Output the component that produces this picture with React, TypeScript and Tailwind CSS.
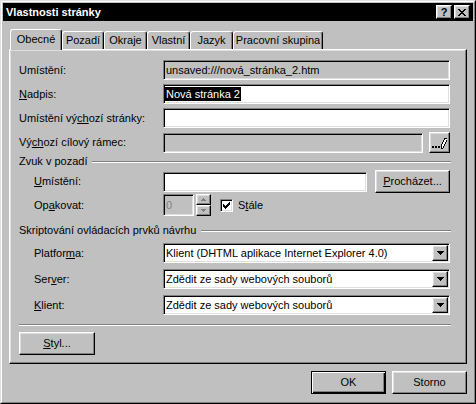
import React from "react";

const raised =
  "border border-t-white border-l-white border-b-black border-r-black shadow-[inset_-1px_-1px_#808080,inset_1px_1px_#dfdfdf]";
const sunken =
  "border border-t-[#808080] border-l-[#808080] border-b-white border-r-white shadow-[inset_1px_1px_#000000,inset_-1px_-1px_#dfdfdf]";

function DropArrow() {
  return (
    <svg width="7" height="4" viewBox="0 0 7 4" shapeRendering="crispEdges">
      <path d="M0 0h7v1h-1v1h-1v1h-1v1h-1v-1h-1v-1h-1v-1h-1z" fill="#000" />
    </svg>
  );
}

function Combo({ text }: { text: string }) {
  return (
    <div className={`${sunken} w-[287px] h-[20px] bg-white p-px flex items-center`}>
      <div className="flex-1 pl-[1px] whitespace-nowrap overflow-hidden">{text}</div>
      <div className={`${raised} w-[16px] h-[16px] bg-[#c0c0c0] flex items-center justify-center`}>
        <DropArrow />
      </div>
    </div>
  );
}

function Tab({ w, label }: { w: string; label: string }) {
  return (
    <div
      className={`${w} h-[18px] border-t border-l border-r border-t-white border-l-white border-r-black shadow-[inset_-1px_0_#808080] rounded-t-[3px] flex justify-center pt-[2px] whitespace-nowrap`}
    >
      {label}
    </div>
  );
}

export default function App() {
  return (
    <div className="w-[476px] h-[404px] overflow-hidden bg-[#c0c0c0] border border-t-[#dfdfdf] border-l-[#dfdfdf] border-b-black border-r-black font-['Liberation_Sans',Arial,sans-serif] text-[11px] leading-[13px] text-black">
      <div className="h-full border border-t-white border-l-white border-b-[#808080] border-r-[#808080] p-px flex flex-col">
        {/* Title bar */}
        <div className="h-[18px] shrink-0 bg-black flex items-center pl-[3px] pr-[3px]">
          <span className="flex-1 text-white font-bold text-[11px]">Vlastnosti stránky</span>
          <div className="flex gap-[2px]">
            <div className={`${raised} w-[16px] h-[14px] bg-[#c0c0c0] flex items-center justify-center font-bold text-[11px] leading-[11px]`}>
              ?
            </div>
            <div className={`${raised} w-[16px] h-[14px] bg-[#c0c0c0] flex items-center justify-center`}>
              <svg width="8" height="7" viewBox="0 0 8 7" shapeRendering="crispEdges">
                <path
                  d="M0 0h2v1h1v1h2v-1h1v-1h2v1h-1v1h-1v1h-1v1h1v1h1v1h1v1h-2v-1h-1v-1h-2v1h-1v1h-2v-1h1v-1h1v-1h1v-1h-1v-1h-1v-1h-1z"
                  fill="#000"
                />
              </svg>
            </div>
          </div>
        </div>

        {/* Tabs */}
        <div className="mt-[8px] ml-[7px] h-[20px] flex items-end shrink-0">
          <div className="relative z-10 w-[52px] h-[21px] mb-[-1px] bg-[#c0c0c0] border-t border-l border-r border-t-white border-l-white border-r-black shadow-[inset_-1px_0_#808080] rounded-t-[3px] flex justify-center pt-[3px]">
            Obecné
          </div>
          <Tab w="w-[42px]" label="Pozadí" />
          <Tab w="w-[43px]" label="Okraje" />
          <Tab w="w-[43px]" label="Vlastní" />
          <Tab w="w-[43px]" label="Jazyk" />
          <Tab w="w-[90px]" label="Pracovní skupina" />
        </div>

        {/* Panel */}
        <div className={`${raised} ml-[6px] w-[458px] h-[315px] shrink-0 pl-[9px] flex flex-col`}>
          {/* Umístění */}
          <div className="mt-[10px] h-[20px] flex items-center">
            <div className="w-[144px]">Umístění:</div>
            <div className={`${sunken} w-[287px] h-[20px] flex items-center pl-[2px] whitespace-nowrap`}>
              unsaved:///nová_stránka_2.htm
            </div>
          </div>
          {/* Nadpis */}
          <div className="mt-[4px] h-[20px] flex items-center">
            <div className="w-[144px]">
              <u>N</u>adpis:
            </div>
            <div className={`${sunken} w-[287px] h-[20px] bg-white flex items-center pl-[1px] whitespace-nowrap`}>
              <span className="bg-black text-white px-[1px] leading-[14px]">Nová stránka 2</span>
            </div>
          </div>
          {/* Umístění výchozí stránky */}
          <div className="mt-[4px] h-[20px] flex items-center">
            <div className="w-[144px]">
              Umístění vý<u>ch</u>ozí stránky:
            </div>
            <div className={`${sunken} w-[287px] h-[20px] bg-white`} />
          </div>
          {/* Výchozí cílový rámec */}
          <div className="mt-[4px] h-[21px] flex items-center">
            <div className="w-[144px]">
              Vý<u>ch</u>ozí cílový rámec:
            </div>
            <div className={`${sunken} w-[260px] h-[20px]`} />
            <div className={`${raised} ml-[6px] w-[21px] h-[21px] flex items-center justify-center`}>
              <svg width="15" height="13" viewBox="0 0 15 13" shapeRendering="crispEdges">
                <rect x="0" y="10" width="2" height="2" fill="#000" />
                <rect x="3" y="10" width="2" height="2" fill="#000" />
                <rect x="6" y="10" width="2" height="2" fill="#000" />
                <path d="M9 12h2l4-8v-2h-2l-4 8z" fill="#fff" stroke="#000" strokeWidth="1" />
              </svg>
            </div>
          </div>

          {/* Zvuk v pozadí */}
          <div className="mt-[2px] h-[13px] w-[432px] flex items-center">
            <span>Zvuk v pozadí</span>
            <div className="flex-1 ml-[5px] h-[2px] border-t border-t-[#808080] border-b border-b-white" />
          </div>
          <div className="mt-[2px] h-[23px] flex items-center">
            <div className="w-[129px] ml-[15px]">
              <u>U</u>místění:
            </div>
            <div className={`${sunken} w-[204px] h-[20px] bg-white`} />
            <div className={`${raised} ml-[8px] w-[75px] h-[23px] flex items-center justify-center`}>
              <span>
                <u>P</u>rocházet...
              </span>
            </div>
          </div>
          <div className="mt-[1px] h-[22px] flex items-center">
            <div className="w-[129px] ml-[15px]">
              Op<u>a</u>kovat:
            </div>
            <div className={`${sunken} w-[31px] h-[22px] flex items-center pl-[2px] text-[#808080]`}>0</div>
            <div className="ml-[2px] w-[15px] h-[22px] flex flex-col">
              <div className={`${raised} h-[11px] flex items-center justify-center`}>
                <svg width="5" height="3" viewBox="0 0 5 3" shapeRendering="crispEdges">
                  <path d="M2 0h1v1h1v1h1v1h-5v-1h1v-1h1z" fill="#808080" />
                </svg>
              </div>
              <div className={`${raised} h-[11px] flex items-center justify-center`}>
                <svg width="5" height="3" viewBox="0 0 5 3" shapeRendering="crispEdges">
                  <path d="M0 0h5v1h-1v1h-1v1h-1v-1h-1v-1h-1z" fill="#808080" />
                </svg>
              </div>
            </div>
            <div className={`${sunken} ml-[9px] w-[13px] h-[13px] bg-white flex items-center justify-center`}>
              <svg width="7" height="7" viewBox="0 0 7 7" shapeRendering="crispEdges">
                <path d="M6 0h1v3h-1v1h-1v1h-1v1h-1v1h-1v-1h-1v-1h-1v-3h1v1h1v1h1v-1h1v-1h1v-1h1z" fill="#000" />
              </svg>
            </div>
            <span className="ml-[5px]">
              S<u>t</u>ále
            </span>
          </div>

          {/* Skriptování */}
          <div className="mt-[8px] h-[13px] w-[432px] flex items-center">
            <span>Skriptování ovládacích prvků návrhu</span>
            <div className="flex-1 ml-[5px] h-[2px] border-t border-t-[#808080] border-b border-b-white" />
          </div>
          <div className="mt-[6px] h-[20px] flex items-center">
            <div className="w-[129px] ml-[15px]">
              Platfor<u>m</u>a:
            </div>
            <Combo text="Klient (DHTML aplikace Internet Explorer 4.0)" />
          </div>
          <div className="mt-[6px] h-[20px] flex items-center">
            <div className="w-[129px] ml-[15px]">
              Ser<u>v</u>er:
            </div>
            <Combo text="Zdědit ze sady webových souborů" />
          </div>
          <div className="mt-[6px] h-[20px] flex items-center">
            <div className="w-[129px] ml-[15px]">
              <u>K</u>lient:
            </div>
            <Combo text="Zdědit ze sady webových souborů" />
          </div>

          <div className="mt-[9px] w-[432px] h-[2px] border-t border-t-[#808080] border-b border-b-white" />
          <div className={`${raised} mt-[6px] w-[76px] h-[23px] flex items-center justify-center`}>
            <span>
              <u>S</u>tyl...
            </span>
          </div>
        </div>

        {/* Bottom buttons */}
        <div className="mt-[7px] ml-[6px] w-[458px] flex justify-end gap-[6px] shrink-0">
          <div className="w-[75px] h-[23px] border border-black">
            <div className="w-full h-full shadow-[inset_1px_1px_#ffffff,inset_-1px_-1px_#000000,inset_-2px_-2px_#808080] flex items-center justify-center">
              OK
            </div>
          </div>
          <div className={`${raised} w-[75px] h-[23px] flex items-center justify-center`}>Storno</div>
        </div>
      </div>
    </div>
  );
}
